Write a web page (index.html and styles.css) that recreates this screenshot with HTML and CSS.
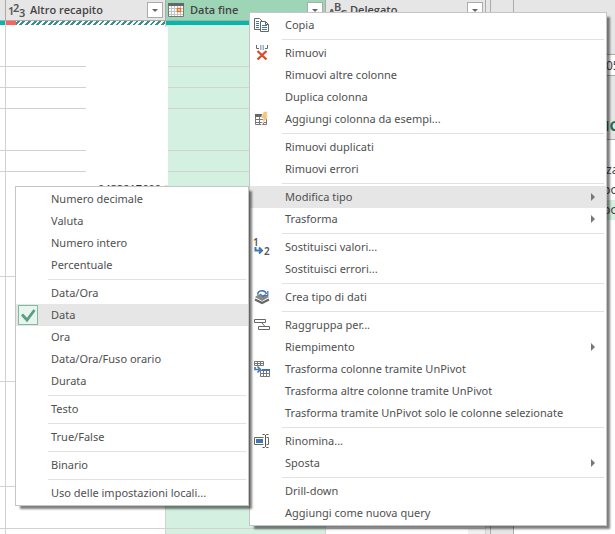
FILE: index.html
```html
<!DOCTYPE html>
<html lang="it">
<head>
<meta charset="utf-8">
<title>Editor di query</title>
<link rel="stylesheet" href="styles.css">
</head>
<body>
<div class="editor">
  <main class="preview">
    <table class="grid">
      <colgroup><col class="col-edge"><col class="col"><col class="col"><col class="col"></colgroup>
      <thead>
        <tr>
          <th></th>
          <th>
            <div class="head">
              <svg class="head-icon" viewBox="0 0 18 16"><text x="0" y="13" class="glyph">1</text><text x="5" y="10" class="glyph">2</text><text x="11" y="15" class="glyph">3</text></svg>
              <span class="head-name">Altro recapito</span>
              <button class="filter" aria-label="Filtra Altro recapito"></button>
            </div>
          </th>
          <th class="selected">
            <div class="head">
              <svg class="head-icon" viewBox="0 0 18 16"><path d="M.500 1.500h15v13H.500z" fill="#fff" stroke="#777"/><path d="M0 1h16v3H0z" fill="#666"/><path d="M3.500 4v10M6.500 4v10M9.500 4v10M12.500 4v10M1 6.500h14M1 9.500h14M1 12.500h14" stroke="#c4c4c4"/><path d="M9.500 6.500h3v3h-3z" fill="#fff" stroke="#e0742c" stroke-width="1.500"/></svg>
              <span class="head-name">Data fine</span>
              <button class="filter" aria-label="Filtra Data fine"></button>
            </div>
          </th>
          <th>
            <div class="head">
              <svg class="head-icon" viewBox="0 0 18 16"><text x="0" y="15" class="glyph">A</text><text x="6" y="9" class="glyph">B</text><text x="12" y="16" class="glyph">C</text></svg>
              <span class="head-name">Delegato</span>
              <button class="filter" aria-label="Filtra Delegato"></button>
            </div>
          </th>
        </tr>
        <tr class="quality"><td></td><td class="mixed"></td><td></td><td></td></tr>
      </thead>
      <tbody>
        <tr class="double"><td></td><td></td><td class="selected"></td><td></td></tr>
        <tr><td></td><td></td><td class="selected"></td><td></td></tr>
        <tr><td></td><td></td><td class="selected"></td><td></td></tr>
        <tr class="double"><td></td><td></td><td class="selected"></td><td></td></tr>
        <tr><td></td><td></td><td class="selected"></td><td></td></tr>
        <tr class="tall"><td></td><td class="number">0433217600</td><td class="selected"></td><td></td></tr>
        <tr class="tall"><td></td><td></td><td class="selected"></td><td></td></tr>
        <tr class="tall"><td></td><td></td><td class="selected"></td><td></td></tr>
        <tr class="double"><td></td><td></td><td class="selected"></td><td></td></tr>
        <tr><td></td><td></td><td class="selected"></td><td class="scroll-corner"></td></tr>
      </tbody>
    </table>
    <div class="mask"></div>
  </main>
  <div class="gutter"></div>
  <aside class="settings">
    <div class="properties">
      <input class="name" aria-label="Nome" value="05">
      <h2 class="steps-title">NC</h2>
    </div>
    <ul class="steps"><li>lza</li><li>po</li><li class="current">po</li></ul>
  </aside>
</div>

<div class="menu menu-column" role="menu">
  <button role="menuitem"><svg class="icon" viewBox="0 0 16 16"><path d="M6 12.500H.500v-11h5l3 3" fill="none" stroke="#666"/><path d="M2 4.500h3M2 6.500h3M2 8.500h3M2 10.500h3" stroke="#3f74b5"/><path d="M6.500 4.500h5l3 3v7h-8z" fill="#fff" stroke="#666"/><path d="M11.500 4.500v3h3" fill="none" stroke="#666"/><path d="M8 8.500h5M8 10.500h5M8 12.500h5" stroke="#3f74b5"/></svg>Copia</button>
  <hr>
  <button role="menuitem"><svg class="icon" viewBox="0 0 16 16"><path d="M2.500 0v3.500H5M13.500 0v3.500H11" fill="none" stroke="#666"/><path d="M6 0h4v5H6z" fill="#c5d8ee"/><path d="M6.500 0v5M9.500 0v5" stroke="#9ab3d0"/><path d="M3.500 6l9 8.500M12.500 6l-9 8.500" stroke="#d84d2b" stroke-width="2.400"/></svg>Rimuovi</button>
  <button role="menuitem">Rimuovi altre colonne</button>
  <button role="menuitem">Duplica colonna</button>
  <button role="menuitem"><svg class="icon" viewBox="0 0 16 16"><path d="M1.500 3.500h11v10h-11z" fill="#fff" stroke="#777"/><path d="M1 3h7v3H1z" fill="#666"/><path d="M2 8.500h10M2 11.500h10M5.500 5v8M9.500 5v8" stroke="#777"/><path d="M9.500.500h4.500l-2 4.500h2.500l-7 9 2-6.500H7z" fill="#f6c477" stroke="#fff" stroke-width=".600"/></svg>Aggiungi colonna da esempi...</button>
  <hr>
  <button role="menuitem">Rimuovi duplicati</button>
  <button role="menuitem">Rimuovi errori</button>
  <hr>
  <button role="menuitem" class="active submenu" aria-haspopup="true">Modifica tipo</button>
  <button role="menuitem" class="submenu" aria-haspopup="true">Trasforma</button>
  <hr>
  <button role="menuitem"><svg class="icon" viewBox="0 0 16 16"><text x="-1" y="7" class="digit">1</text><text x="10" y="16" class="digit">2</text><path d="M1.500 8v3.500H8M5 8.500l3 3-3 3" fill="none" stroke="#3f74b5" stroke-width="2"/></svg>Sostituisci valori...</button>
  <button role="menuitem">Sostituisci errori...</button>
  <hr>
  <button role="menuitem"><svg class="icon" viewBox="0 0 16 16"><path d="M1 10.500l7 3.500 7-3.500" fill="none" stroke="#666" stroke-width="2.200"/><path d="M1 8l4-3 3 2 3-2 4 3-7 4z" fill="#888"/><path d="M3.500 5.500C4 1 11 0 12.500 5" fill="none" stroke="#3f74b5" stroke-width="1.500"/><path d="M13.800 2v4.500H9.500M6 5l4 3" fill="none" stroke="#3f74b5" stroke-width="1.200"/></svg>Crea tipo di dati</button>
  <hr>
  <button role="menuitem"><svg class="icon" viewBox="0 0 16 16"><path d="M.500 2.500h11v3H.500zM4.500 9.500h11v3h-11z" fill="#fff" stroke="#666"/><path d="M8 6l3 3.500" stroke="#666"/></svg>Raggruppa per...</button>
  <button role="menuitem" class="submenu" aria-haspopup="true">Riempimento</button>
  <button role="menuitem"><svg class="icon" viewBox="0 0 16 16"><path d="M.500.500h9v4h-9zM0 2.500h10M3.500 0v5M6.500 0v5" fill="none" stroke="#777"/><path d="M1 6v2.500h4M3.500 5.500l3 3-3 3" fill="none" stroke="#3f74b5" stroke-width="1.600"/><path d="M6.500 9.500h9v6h-9zM6 12.500h10M9.500 10v6M12.500 10v6" fill="none" stroke="#777"/><path d="M8 8h8v2H8z" fill="#3f74b5"/></svg>Trasforma colonne tramite UnPivot</button>
  <button role="menuitem">Trasforma altre colonne tramite UnPivot</button>
  <button role="menuitem">Trasforma tramite UnPivot solo le colonne selezionate</button>
  <hr>
  <button role="menuitem"><svg class="icon" viewBox="0 0 16 16"><path d="M9.500 4.500h-9v7h9M12.500 4.500h2v7h-2" fill="none" stroke="#666"/><path d="M2 6h7v4H2z" fill="#3f74b5"/><path d="M8.500 1.500h2l1 1 1-1h2M8.500 14.500h2l1-1 1 1h2M11.500 2v12" fill="none" stroke="#555"/></svg>Rinomina...</button>
  <button role="menuitem" class="submenu" aria-haspopup="true">Sposta</button>
  <hr>
  <button role="menuitem">Drill-down</button>
  <button role="menuitem">Aggiungi come nuova query</button>
</div>

<div class="menu menu-type" role="menu">
  <button role="menuitem">Numero decimale</button>
  <button role="menuitem">Valuta</button>
  <button role="menuitem">Numero intero</button>
  <button role="menuitem">Percentuale</button>
  <hr>
  <button role="menuitem">Data/Ora</button>
  <button role="menuitemradio" aria-checked="true" class="active"><svg class="check" viewBox="0 0 18 18"><path d="M3 8.500l5 5.500 7.500-10" fill="none" stroke="#5a9f83" stroke-width="2.800"/></svg>Data</button>
  <button role="menuitem">Ora</button>
  <button role="menuitem">Data/Ora/Fuso orario</button>
  <button role="menuitem">Durata</button>
  <hr>
  <button role="menuitem">Testo</button>
  <hr>
  <button role="menuitem">True/False</button>
  <hr>
  <button role="menuitem">Binario</button>
  <hr>
  <button role="menuitem">Uso delle impostazioni locali...</button>
</div>
</body>
</html>
```
FILE: styles.css
```css
* { box-sizing: border-box; }

body {
  margin: 0;
  overflow: hidden;
  background: #fff;
  color: #505050;
  font: 11px/20px "Noto Sans", "Open Sans", sans-serif;
}

button, input { font: inherit; color: inherit; }

.editor { display: flex; height: 100vh; overflow: hidden; }

/* Data preview */
.preview { position: relative; flex: none; }

.grid {
  table-layout: fixed;
  width: 486px;
  border-spacing: 0;
}
.col-edge { width: 6px; }
.col { width: 160px; }

th {
  height: 21px;
  padding: 0;
  background: #e6e6e6;
  border-right: 1px solid #ababab;
  border-bottom: 1px solid #ababab;
}
th.selected { background: #9fd5b7; }

.head { display: flex; align-items: center; height: 20px; padding: 0 2px; }
.head-icon { width: 18px; height: 16px; margin-right: 4px; overflow: visible; }
.head-name { flex: 1; text-align: left; font-family: "Open Sans", sans-serif; font-weight: 600; color: #444; }
.glyph { font-size: 11px; font-weight: 600; fill: #555; }

.filter {
  display: grid;
  place-items: center;
  width: 16px;
  height: 16px;
  padding: 0;
  background: #fff;
  border: 1px solid #ababab;
}
.filter::after {
  content: "";
  border: 3px solid transparent;
  border-top-color: #666;
  border-bottom: 0;
}

td {
  height: 21px;
  padding: 0;
  border-right: 1px solid #d2d2d2;
  border-bottom: 1px solid #d2d2d2;
}
td.selected { background: #d3f0e0; }
.double td { height: 42px; }
.tall td { height: 105px; }
.tall .number {
  padding: 7px 4px 0 0;
  color: #333;
  text-align: right;
  vertical-align: top;
}
.scroll-corner { background: linear-gradient(#f0f0f0, #f0f0f0) right / 17px 100% no-repeat; }

.quality td { height: 4px; border-bottom: 0; background: #01b8aa; }
.quality .mixed {
  background:
    linear-gradient(#fd625e, #fd625e) 0 0 / 10px 100% no-repeat,
    repeating-linear-gradient(135deg, #37918a 0 2px, #fff 2px 4px);
}

.mask {
  position: absolute;
  left: 86px;
  top: 27px;
  width: 82px;
  height: 158px;
  background: #fff;
}

/* Strip between the preview and the settings pane */
.gutter {
  width: 28px;
  background: linear-gradient(#ababab, #ababab) 4px 0 / 1px 100% no-repeat #e6e6e6;
  border-right: 1px solid #ababab;
}

.settings { flex: 1; min-width: 0; overflow: hidden; color: #444; font-size: 12px; }
.properties {
  height: 140px;
  padding-top: 54px;
  background: #e6e6e6;
  border-bottom: 1px solid #ababab;
}
.name {
  display: block;
  width: 120%;
  height: 22px;
  padding: 0 0 0 91px;
  background: #fff;
  border: 1px solid #ababab;
}
.steps-title {
  margin: 40px 0 0;
  padding-left: 84px;
  color: #217346;
  font-size: 14px;
  line-height: 20px;
}
.steps { margin: 0; padding: 20px 0 0; list-style: none; }
.steps li { padding-left: 89px; line-height: 20px; white-space: nowrap; }
.steps .current { background: #d3f0e0; }

/* Context menus */
.menu {
  position: absolute;
  padding: 1px 0;
  background: #fff;
  border: 1px solid #c6c6c6;
  box-shadow: 4px 4px 2px -1px rgba(0, 0, 0, 0.5);
}
.menu-column { left: 249px; top: 12px; width: 358px; }
.menu-type { left: 15px; top: 186px; width: 234px; }

.menu button {
  position: relative;
  display: block;
  width: 100%;
  height: 22px;
  padding: 0 0 0 35px;
  background: none;
  border: 0;
  text-align: left;
  white-space: nowrap;
}
.menu .active { background: #e6e6e6; }

.menu hr {
  height: 1px;
  margin: 3px 2px 2px 32px;
  background: #e1e1e1;
  border: 0;
}

.submenu::after {
  content: "";
  position: absolute;
  top: 7px;
  right: 11px;
  border: 4px solid transparent;
  border-left-color: #777;
  border-right: 0;
}

.icon { position: absolute; left: 4px; top: 3px; width: 16px; height: 16px; overflow: visible; }
.digit { font-size: 10px; font-weight: 600; fill: #555; }

.check {
  position: absolute;
  left: 2px;
  top: 1px;
  width: 20px;
  height: 20px;
  background: #e9f4ee;
  border: 1px solid #7dbd9c;
}
```
